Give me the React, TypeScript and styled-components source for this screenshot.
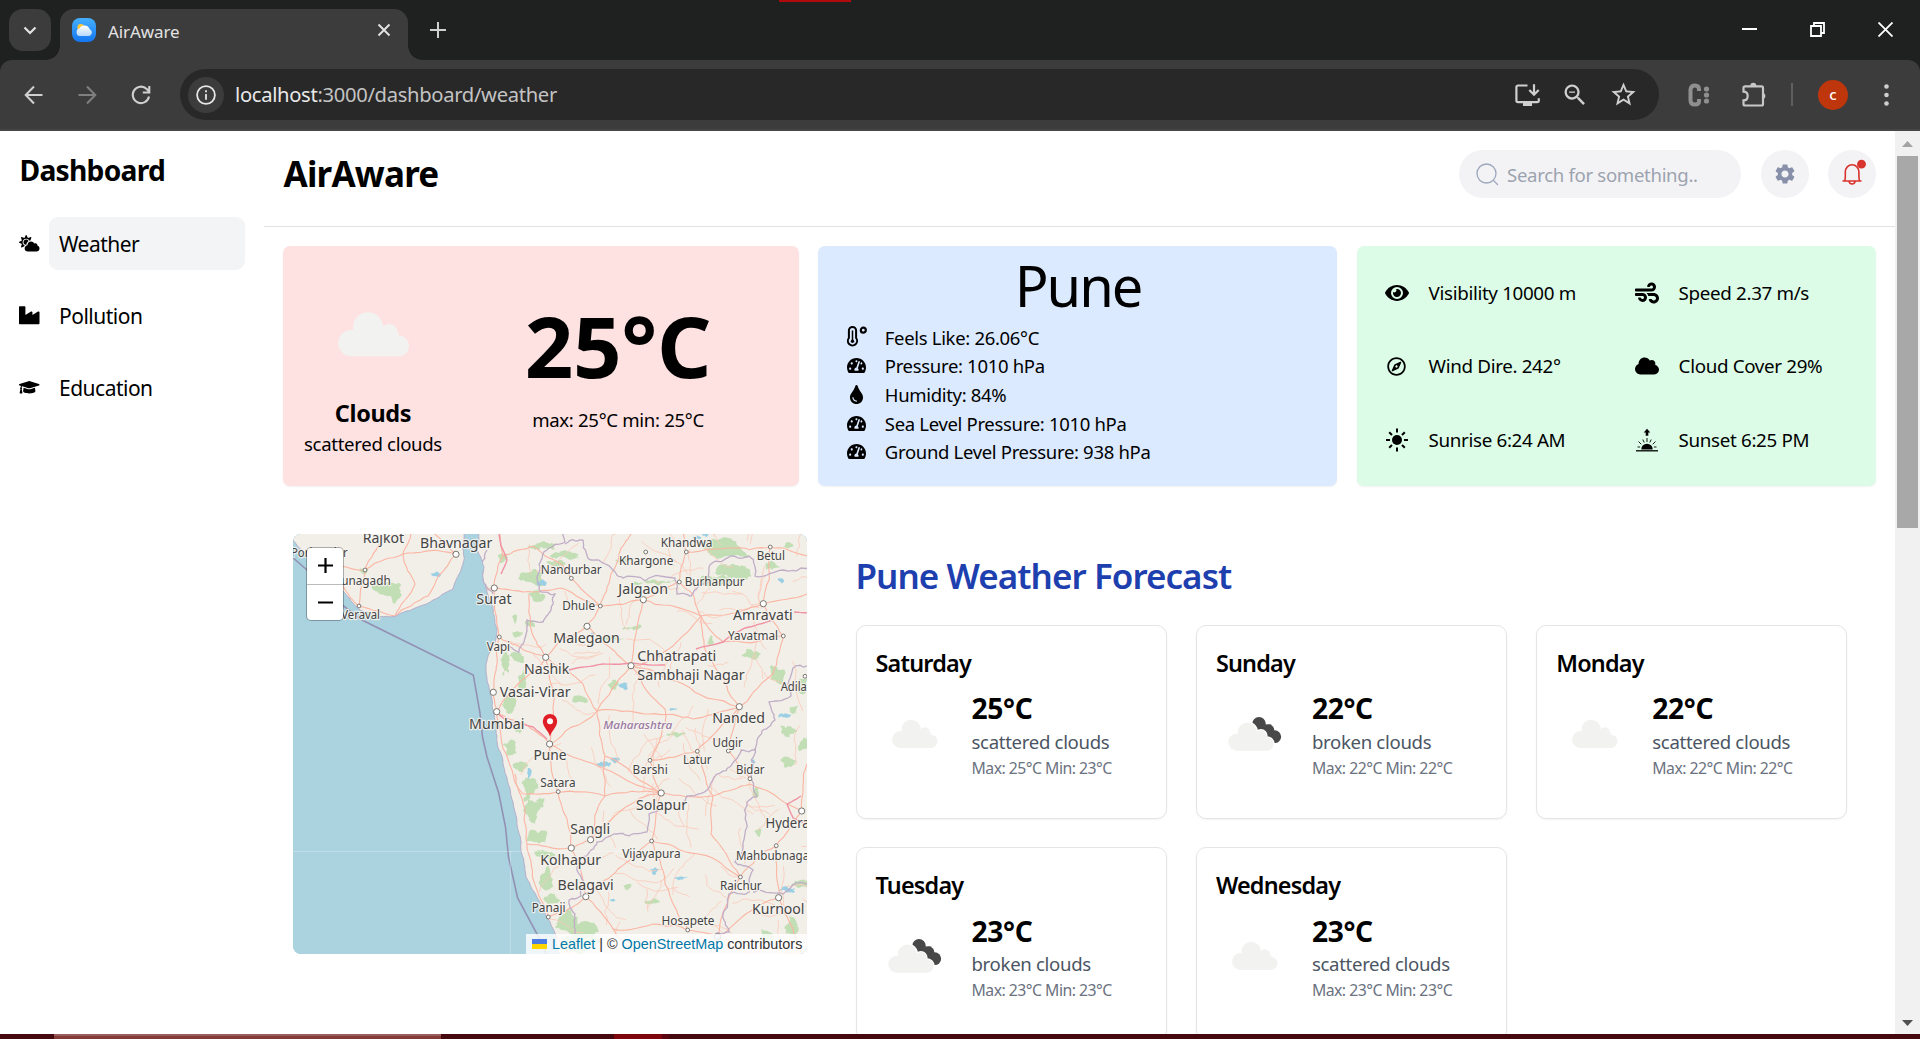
import React from "react";
import styled, { createGlobalStyle } from "styled-components";
import {
  FaCloudSun, FaIndustry, FaGraduationCap, FaTachometerAlt, FaTint, FaEye, FaWind, FaRegCompass, FaCloud,
} from "react-icons/fa";
import { MdSettings, MdStarBorder, MdOutlineZoomOut } from "react-icons/md";

const GlobalStyle = createGlobalStyle`
  * { box-sizing: border-box; }
  html, body { margin: 0; padding: 0; background: #fff; overflow: hidden; }
  body { font-family: "Noto Sans", "Open Sans", sans-serif; color: #000; letter-spacing: -0.02em; }
  svg { display: block; flex: none; }
`;

const Screen = styled.div`
  width: 1920px; height: 1039px; display: flex; flex-direction: column; overflow: hidden; position: relative;
`;

/* ---------- browser chrome ---------- */
const TabStrip = styled.div`
  height: 60px; flex: none; background: #1f2120; display: flex; align-items: flex-start; padding: 9px 27px 0 9px;
`;
const TabMenu = styled.div`
  width: 42px; height: 42px; border-radius: 14px; background: #3c3c3c; display: grid; place-items: center; margin-right: 9px;
`;
const Tab = styled.div`
  position: relative; width: 348px; height: 51px; border-radius: 14px 14px 0 0; background: #3c3c3c;
  display: flex; align-items: center; padding: 0 17px 9px 12px; color: #e3e3e3; font-size: 17px;
  &::before, &::after {
    content: ""; position: absolute; bottom: 0; width: 14px; height: 14px;
  }
  &::before { left: -14px; background: radial-gradient(circle at 0 0, transparent 13.5px, #3c3c3c 14px); }
  &::after { right: -14px; background: radial-gradient(circle at 100% 0, transparent 13.5px, #3c3c3c 14px); }
`;
const TabTitle = styled.span`
  margin-left: 12px; flex: 1; line-height: 20px; padding-top: 3px; letter-spacing: -0.005em;
`;
const NewTab = styled.div`margin: 13px 0 0 22px;`;
const WindowButtons = styled.div`
  margin: 13px 0 0 auto; display: flex; gap: 53px;
`;
const RecordingBar = styled.div`
  position: absolute; left: 779px; top: 0; width: 72px; height: 2px; background: #b00a0d;
`;
const Toolbar = styled.div`
  height: 71px; flex: none; background: #3c3c3c; border-bottom: 2px solid #464646; display: flex; align-items: center;
  padding: 0 23px 0 22px; border-radius: 12px 12px 0 0;
`;
const ToolbarBack = styled.div`background: #1f2120; flex: none;`;
const NavIcons = styled.div`display: flex; gap: 29.5px; width: 158px;`;
const Omnibox = styled.div`
  width: 1479px; height: 51px; border-radius: 26px; background: #282828; display: flex; align-items: center;
  padding: 0 21px 0 8px; color: #e8e8e8; font-size: 20.2px;
`;
const SiteInfo = styled.div`
  width: 36px; height: 36px; border-radius: 50%; background: #3c3c3c; display: grid; place-items: center; margin-right: 11px;
`;
const Url = styled.span`line-height: 28px; flex: 1; padding-bottom: 2px; span { color: #c3c3c3; }`;
const OmniActions = styled.div`display: flex; align-items: center; gap: 20.5px; color: #cfcfcf;`;
const Extensions = styled.div`display: flex; align-items: center; margin-left: 28px; color: #c7c7c7;`;
const PuzzleSlot = styled.div`margin-left: 31px;`;
const Divider = styled.div`width: 2px; height: 23px; background: #5f5f5f; margin: 0 25px 0 24px;`;
const Avatar = styled.div`
  width: 30px; height: 30px; border-radius: 50%; background: #c0360c; color: #fff; font-size: 15px; line-height: 28px;
  text-align: center; margin-right: 36px; letter-spacing: 0; font-weight: 500;
`;

/* ---------- page frame ---------- */
const Page = styled.div`height: 903px; flex: none; display: flex; overflow: hidden;`;
const Sidebar = styled.aside`width: 264px; flex: none; padding: 20px 19px;`;
const SidebarTitle = styled.h2`
  margin: 0 0 28px 0.5px; font-size: 28.2px; line-height: 38px; font-weight: 700; letter-spacing: -0.026em;
`;
const NavItem = styled.div`
  display: flex; align-items: center; gap: 9.5px; height: 53px; margin-bottom: 19px;
`;
const NavLabel = styled.div<{ $active?: boolean }>`
  flex: 1; height: 53px; line-height: 53px; padding: 1px 0 0 10px; border-radius: 9px; font-size: 21px; letter-spacing: -0.024em;
  background: ${(p) => (p.$active ? "#f3f4f6" : "transparent")};
`;
const Main = styled.main`width: 1631px; flex: none; display: flex; flex-direction: column;`;
const Header = styled.header`
  height: 96px; flex: none; border-bottom: 1px solid #e0e2e4; display: flex; align-items: flex-start; padding: 19px 19px 0; gap: 19px;
`;
const Brand = styled.h1`
  margin: 0 auto 0 0.5px; font-size: 35px; line-height: 48px; font-weight: 700; letter-spacing: -0.023em;
`;
const SearchBox = styled.div`
  width: 282px; height: 48px; border-radius: 24px; background: #f3f3f6; display: flex; align-items: center; margin-right: 1px;
  padding-left: 17px; gap: 8px; color: #9ca3af; font-size: 18.6px;
`;
const RoundButton = styled.div`
  width: 48px; height: 48px; border-radius: 50%; background: #f3f3f6; display: grid; place-items: center; color: #8790a8;
`;

/* ---------- summary cards ---------- */
const Summary = styled.section`
  display: grid; grid-template-columns: 516px 519px 519.4px; column-gap: 19.3px; padding: 19px 0 0 19px;
`;
const Panel = styled.div<{ $bg: string }>`
  height: 240px; border-radius: 7px; background: ${(p) => p.$bg}; box-shadow: 0 1px 2px rgba(0, 0, 0, 0.06);
`;
const NowPanel = styled(Panel)`display: flex; align-items: center; padding-left: 20px;`;
const Condition = styled.div`
  width: 140px; display: flex; flex-direction: column; align-items: center; white-space: nowrap; padding-top: 2px;
`;
const ConditionName = styled.div`font-size: 23.4px; line-height: 33.6px; font-weight: 700; padding-top: 2px;`;
const ConditionText = styled.div`font-size: 18.6px; line-height: 28.8px;`;
const TempBlock = styled.div`width: 350px; display: flex; flex-direction: column; align-items: center; padding-top: 2px;`;
const BigTemp = styled.div`font-size: 85px; line-height: 86.4px; font-weight: 700; padding-top: 3px;`;
const Range = styled.div`font-size: 18.6px; line-height: 28.8px; margin-top: 17px;`;
const CityPanel = styled(Panel)`padding: 11px 0 0 28.5px;`;
const City = styled.div`
  font-size: 56px; line-height: 57.6px; text-align: center; margin: 0 28px 9px 0; letter-spacing: -0.035em;
`;
const CityRow = styled.div`
  display: grid; grid-template-columns: 20px 1fr; column-gap: 18px; height: 28.7px; line-height: 28.7px; font-size: 18.5px;
  svg { justify-self: center; margin-top: 4px; }
  &:nth-child(2) svg { margin-top: 2px; }
`;
const MetricsPanel = styled(Panel)`
  display: grid; grid-template-columns: 250px 1fr; grid-auto-rows: 73.5px; padding: 10px 0 0 28px;
`;
const Metric = styled.div`
  display: grid; grid-template-columns: 24px 1fr; column-gap: 20px; align-items: center; font-size: 18.8px; white-space: nowrap;
  letter-spacing: -0.018em;
  svg { justify-self: center; }
`;

/* ---------- lower section ---------- */
const Lower = styled.section`display: flex; padding: 48px 0 0 29px;`;
const MapBox = styled.div`
  position: relative; width: 514px; height: 420px; border-radius: 8px; overflow: hidden; flex: none; background: #aad3df;
`;
const ZoomControl = styled.div`
  position: absolute; left: 13px; top: 13px; width: 38px; height: 74px; border: 1.5px solid rgba(0, 0, 0, 0.28);
  border-radius: 5px; background: #fff; background-clip: padding-box; display: flex; flex-direction: column;
`;
const ZoomKey = styled.div`
  flex: 1; display: grid; place-items: center;
  &:first-child { border-bottom: 1px solid #bbb; }
`;
const Attribution = styled.div`
  position: absolute; right: 0; bottom: 0; width: 281px; height: 20px; background: rgba(255, 255, 255, 0.8);
  display: flex; align-items: center; padding-left: 6px; font: 14.4px/20px "Liberation Sans", Arial, sans-serif; color: #333;
  white-space: pre; letter-spacing: 0;
  svg { margin-right: 5px; }
  a { color: #0078a8; }
`;
const Forecast = styled.div`margin-left: 48.5px; padding-top: 20px;`;
const ForecastTitle = styled.h2`
  margin: 0 0 28px; font-size: 35px; line-height: 43.2px; font-weight: 600; color: #1e40af; letter-spacing: -0.027em;
`;
const DayGrid = styled.div`
  display: grid; grid-template-columns: repeat(3, 311px); grid-auto-rows: 193.5px; gap: 28.7px 29.4px;
`;
const DayCard = styled.div`
  border: 1px solid #e3e5e8; border-radius: 10px; box-shadow: 0 1px 2px rgba(0, 0, 0, 0.05); padding: 20.6px 0 0 19px;
`;
const DayName = styled.div`font-size: 23.4px; line-height: 33.6px; font-weight: 600; letter-spacing: -0.034em;`;
const DayBody = styled.div`display: flex; align-items: center; gap: 19.2px; margin-top: 9px;`;
const DayTemp = styled.div`font-size: 28.2px; line-height: 38.4px; font-weight: 700;`;
const DayText = styled.div`font-size: 18.6px; line-height: 27.8px; color: #4b5563;`;
const DayRange = styled.div`font-size: 15.8px; line-height: 24px; color: #6b7280; letter-spacing: -0.033em;`;

const ScrollTrack = styled.div`
  width: 25px; flex: none; background: #f1f1f1; display: flex; flex-direction: column; align-items: center;
  padding: 10px 0 8px;
`;
const ScrollThumb = styled.div`width: 21px; height: 372px; background: #a8a8a8; margin: 9px 0 auto;`;

const Taskbar = styled.div`height: 5px; flex: none; background: #45080f; display: flex;`;
const TaskPart = styled.div<{ $w: number; $c: string; $top?: string }>`
  width: ${(p) => p.$w}px; height: 5px; background: ${(p) => p.$c}; border-top: ${(p) => (p.$top ? `2px solid ${p.$top}` : "0")};
`;

/* ---------- drawings ---------- */
const CloudShape = ({ fill = "#f2f2f0", outline }: { fill?: string; outline?: string }) => (
  <g fill={fill} stroke={outline || "none"} strokeWidth={outline ? 3 : 0}>
    {outline && (
      <g>
        <circle cx="45.8" cy="43.5" r="12.5" /><circle cx="63.5" cy="48" r="7.2" />
        <circle cx="71.3" cy="59" r="8.7" />
      </g>
    )}
    <g stroke="none">
      <circle cx="45.8" cy="43.5" r="12.5" />
      <circle cx="63.5" cy="48" r="7.2" />
      <circle cx="32" cy="56.7" r="11" />
      <circle cx="71.3" cy="59" r="8.7" />
      <rect x="32" y="48" width="39.3" height="19.7" />
    </g>
  </g>
);
const ScatteredIcon = ({ size }: { size: number }) => (
  <svg width={size} height={size} viewBox="0 0 100 100"><CloudShape /></svg>
);
const BrokenIcon = ({ size }: { size: number }) => (
  <svg width={size} height={size} viewBox="0 0 100 100">
    <g fill="#484848">
      <circle cx="56" cy="36.2" r="8.8" /><circle cx="68.5" cy="44.5" r="7.4" /><circle cx="76.5" cy="53" r="8.3" />
      <rect x="56" y="37" width="16" height="20" />
    </g>
    <g transform="translate(-5 3.6)"><CloudShape outline="#fff" /></g>
  </svg>
);
const Thermo = () => (
  <svg width="20" height="21" viewBox="0 0 20 21" fill="none" stroke="#000">
    <path d="M1.9 4.6a3.6 3.6 0 0 1 7.2 0v7.4a4.6 4.6 0 1 1-7.2 0z" strokeWidth="2" />
    <path d="M5.500 4.500v10" strokeWidth="1.5" /><circle cx="5.5" cy="15.2" r="1.7" fill="#000" stroke="none" />
    <circle cx="16.3" cy="4.2" r="2.5" strokeWidth="2.2" />
  </svg>
);
const SunIcon = () => (
  <svg width="24" height="24" viewBox="0 0 24 24" stroke="#000" strokeWidth="2">
    <circle cx="12" cy="12" r="5" stroke="none" />
    <path d="M12 .5v4M12 19.5v4M1 12h4M19 12h4M4.2 4.2l2.8 2.8M17 17l2.8 2.8M4.2 19.8L7 17M17 7l2.8-2.8" />
  </svg>
);
const HorizonIcon = () => (
  <svg width="24" height="24" viewBox="0 0 24 24" stroke="#000">
    <path d="M1 22.8h22" strokeWidth="1.3" />
    <path d="M6.3 21.4a5.7 5.7 0 0 1 11.4 0z" stroke="none" />
    <path d="M12 10v4M7.8 11.5l1.4 3M16.2 11.5l-1.4 3M3.5 13.5l2.8 2.8M20.5 13.5l-2.8 2.8M2.5 19h2.6M21.5 19h-2.6" strokeWidth="0.9" />
    <path d="M12 0.8L15.3 4.6H13.3V7.8H10.7V4.6H8.7Z" stroke="none" />
  </svg>
);
const InstallIcon = () => (
  <svg width="25" height="22" viewBox="0 0 25 22" fill="none" stroke="#cfcfcf" strokeWidth="2.2">
    <path d="M12.5 1.5H3a1.6 1.6 0 0 0-1.6 1.6v13.5A1.6 1.6 0 0 0 3 18.2h19.2a1.6 1.6 0 0 0 1.6-1.6v-2.4" />
    <path d="M19 .2v10M14.3 6l4.7 4.8L23.7 6" />
    <path d="M8 18.500h9V22H8z" fill="#cfcfcf" stroke="none" />
  </svg>
);
const PuzzleIcon = () => (
  <svg width="25" height="25" viewBox="0 0 25 25" fill="none" stroke="#c7c7c7" strokeWidth="2.2">
    <path d="M1.5 5.8a1.5 1.5 0 0 1 1.5-1.5h16.5A1.5 1.5 0 0 1 21 5.8v16.2a1.5 1.5 0 0 1-1.5 1.5H3A1.5 1.5 0 0 1 1.5 22v-3.6c3 0 4.2-2 4.2-4.4S4.5 9.6 1.5 9.6z" />
    <path d="M8.3 4a3 3.2 0 0 1 6 0zM21.5 11a3 3.2 0 0 1 0 6z" fill="#c7c7c7" stroke="none" />
  </svg>
);
const Favicon = () => (
  <svg width="24" height="24" viewBox="0 0 24 24">
    <defs>
      <linearGradient id="sky" x1="0" y1="0" x2="0" y2="1"><stop offset="0" stopColor="#45b0ff" /><stop offset="1" stopColor="#1476f2" /></linearGradient>
      <linearGradient id="puff" x1="0" y1="0" x2="0" y2="1"><stop offset="0" stopColor="#fff" /><stop offset="1" stopColor="#b9d8fb" /></linearGradient>
    </defs>
    <rect width="24" height="24" rx="8" fill="url(#sky)" />
    <circle cx="8.8" cy="9.5" r="3.4" fill="#ffc83a" />
    <path d="M7.6 18a3.8 3.8 0 0 1-.2-7.4 5.6 5.6 0 0 1 10.3.6 3.6 3.6 0 0 1-.6 6.8z" fill="url(#puff)" />
  </svg>
);

/* ---------- map ---------- */
type Pt = [number, number];
const rng = (seed: number) => () => {
  seed = (seed * 1664525 + 1013904223) % 4294967296;
  return seed / 4294967296;
};
const wobble = (pts: Pt[], amount: number, seed: number, closed = false) => {
  const r = rng(seed);
  let cur = closed ? [...pts, pts[0]] : pts;
  for (let k = 0; k < 3; k++) {
    const next: Pt[] = [cur[0]];
    for (let i = 1; i < cur.length; i++) {
      const [ax, ay] = cur[i - 1];
      const [bx, by] = cur[i];
      const d = Math.min(Math.hypot(bx - ax, by - ay), 60) * amount;
      next.push([(ax + bx) / 2 + (r() - 0.5) * d, (ay + by) / 2 + (r() - 0.5) * d], cur[i]);
    }
    cur = next;
  }
  return "M" + cur.map(([x, y]) => `${x.toFixed(1)} ${y.toFixed(1)}`).join("L") + (closed ? "Z" : "");
};

const saurashtra: Pt[] = [[-30, -30], [-30, -6], [-2, 4], [14, 20], [30, 38], [50, 57], [58, 67], [67, 76], [87, 82.5], [102, 82.5], [120, 75], [140, 66], [160, 55], [163, 46], [168, 36], [171, 26], [169.5, 14], [171, 6], [172, -30]];
const mainland: Pt[] = [[186, -30], [186, -2], [184, 16], [189, 26], [191, 33], [190, 46], [193, 54], [195, 61], [200, 73], [202, 86], [204, 96], [202, 108], [197, 118], [193, 133], [194, 146], [197, 158], [199.5, 168], [200.5, 179], [203, 190], [204, 203], [206, 216], [212, 239], [217.5, 258], [222, 278], [225, 296], [228.5, 319], [233, 343], [242, 359], [250, 373], [254, 383], [259, 393], [262.5, 401], [267, 422], [268, 450], [550, 450], [550, -30]];
const maritime = "M-2 22L14 36L40 64L69 86L180.3 141L187 179L189.5 203L194 223L205.7 259L212.5 293L215.5 323L224.6 364L244.6 401L254 422";

type Place = [string, number, number, number, 0 | 1, number, number];
/* name, left, right, baseline, large, dot x, dot y */
const places: Place[] = [
  ["Rajkot", 69.7, 111, 8.7, 1, -9, -9], ["Bhavnagar", 127, 199.3, 14.3, 1, 163, 20.3], ["Porbandar", -2, 54.7, 23.3, 0, -9, -9],
  ["Junagadh", 45, 97.7, 50.7, 0, 72, 36], ["Veraval", 48.3, 87, 84.7, 0, 66, 72], ["Surat", 183.3, 218.7, 70.3, 1, 201.3, 54],
  ["Vapi", 193.7, 217, 116.7, 0, 206.3, 103], ["Nashik", 231, 276.3, 139.7, 1, 252.7, 123.3], ["Vasai-Virar", 206.7, 277.7, 162.7, 1, 200.3, 158.3],
  ["Mumbai", 176, 231.3, 195, 1, 203.7, 177.7], ["Pune", 240.4, 273.5, 226, 1, 256.6, 210], ["Nandurbar", 247.7, 308.7, 39.7, 0, 278.3, 44.3],
  ["Khandwa", 367.7, 419.3, 13, 0, 393.3, 18], ["Khargone", 326, 380.3, 31.3, 0, 352.7, 18], ["Betul", 463.7, 492, 26.3, 0, 477.3, 13],
  ["Burhanpur", 391.7, 451.7, 52, 0, 386.3, 48], ["Jalgaon", 325.3, 375, 60, 1, 350.3, 65.7], ["Dhule", 269.3, 302, 76.3, 0, 307.3, 72],
  ["Amravati", 440, 499.7, 86, 1, 470.3, 69.7], ["Yavatmal", 435, 485, 105.7, 0, 490.3, 102], ["Malegaon", 260.3, 326.7, 108.7, 1, 294, 92.3],
  ["Chhatrapati", 344.3, 423.3, 127.3, 1, 338, 131.7], ["Sambhaji Nagar", 344.3, 451.7, 146, 1, -9, -9], ["Adilabad", 487.7, 534, 156.7, 0, 512, 142.3],
  ["Nanded", 419.3, 472, 189.3, 1, 446.3, 172.7], ["Udgir", 419.5, 449.8, 212.7, 0, 435.3, 217], ["Latur", 390, 418.5, 230.3, 0, 404.3, 217.3],
  ["Barshi", 339.6, 374.7, 239.7, 0, 357, 226.3], ["Bidar", 443, 471.5, 240, 0, 457, 244.7], ["Satara", 247.3, 282.5, 252.7, 0, 265.2, 257.7],
  ["Solapur", 343, 394, 275.7, 1, 368.2, 259], ["Sangli", 277.3, 317, 299.7, 1, 297.6, 305.7], ["Hyderabad", 472.5, 540, 293.7, 1, 508.7, 277],
  ["Kolhapur", 247.3, 308, 331, 1, 278.3, 314], ["Vijayapura", 329.3, 387.5, 323.7, 0, 358.6, 307], ["Mahbubnagar", 443, 521, 325.7, 0, 483.2, 311.7],
  ["Belagavi", 264.5, 320.7, 356.3, 1, 292.8, 362.7], ["Raichur", 427, 468.7, 356, 0, 447.4, 343], ["Panaji", 238.7, 272.5, 377.7, 0, 255.3, 383],
  ["Kurnool", 459, 511.5, 379.7, 1, 485.6, 363.7], ["Hosapete", 368.5, 421.5, 391, 0, 394.7, 396],
];

const trunkRoads: Pt[][] = [
  [[184, 58], [201, 54], [230, 58], [268, 54], [307, 72], [350, 66], [386, 48]],
  [[201, 54], [206, 103], [204, 130], [200, 158], [204, 178], [232, 190], [257, 210], [265, 258], [278, 314], [293, 363], [320, 395], [345, 422]],
  [[204, 178], [225, 150], [253, 123], [294, 92], [307, 72], [318, 40], [328, 14], [340, -2]],
  [[253, 123], [262, 160], [257, 210]], [[257, 210], [304, 177], [338, 132], [350, 66]],
  [[304, 177], [290, 150], [253, 123]], [[304, 177], [312, 222], [368, 259]], [[257, 210], [305, 232], [368, 259], [420, 262], [457, 250], [509, 277]],
  [[338, 132], [372, 175], [357, 226], [368, 259], [359, 307], [372, 350], [395, 396]], [[446, 173], [404, 217], [357, 226]],
  [[446, 173], [436, 217], [457, 245]], [[338, 132], [390, 150], [446, 173], [480, 140], [490, 102], [470, 70], [477, 13]],
  [[350, 66], [408, 82], [470, 70], [514, 60]], [[386, 48], [393, 18], [390, -2]], [[393, 18], [440, 14], [477, 13], [514, 22]],
  [[294, 92], [320, 116], [338, 132]], [[298, 306], [278, 314]], [[298, 306], [330, 275], [368, 259]], [[359, 307], [325, 335], [293, 363]],
  [[293, 363], [272, 378], [255, 383]], [[255, 383], [262, 400], [276, 422]], [[320, 395], [360, 390], [395, 396], [425, 403], [486, 364], [483, 312], [509, 277]],
  [[447, 343], [483, 312]], [[447, 343], [425, 403]], [[359, 307], [405, 320], [447, 343]], [[420, 262], [418, 300], [447, 343]],
  [[509, 277], [514, 230]], [[486, 364], [500, 395], [512, 422]], [[72, 36], [66, 72], [102, 82], [135, 62], [163, 20]], [[72, 36], [88, 8], [92, -2]],
  [[0, 12], [30, 28], [72, 36], [110, 20], [118, -2]], [[66, 72], [50, 52], [30, 28]], [[110, 20], [122, 50], [102, 82]], [[110, 20], [163, 20]],
  [[163, 20], [150, 8], [140, -2]], [[201, 54], [210, 22], [206, -2]], [[210, 22], [240, 12], [268, 30], [278, 44]], [[278, 44], [307, 72]],
  [[206, 103], [225, 112], [253, 123]], [[236, 60], [238, 95], [253, 123]], [[408, 82], [414, 120], [446, 173]], [[408, 82], [400, 60], [386, 48]],
  [[408, 82], [430, 108], [490, 102]], [[408, 82], [380, 112], [338, 132]], [[404, 217], [420, 262]], [[265, 258], [312, 262], [368, 259]],
  [[312, 222], [312, 262], [298, 306]], [[304, 177], [357, 180], [400, 185], [446, 173]], [[222, 240], [232, 275], [234, 310], [240, 345], [255, 383]],
  [[204, 178], [215, 225], [230, 260]], [[234, 310], [278, 314]], [[230, 260], [265, 258]],
];
const redRoads: Pt[][] = [[[276, 136], [310, 130], [338, 129], [372, 131]], [[403, 115], [430, 108], [452, 94], [480, 86]], [[501, 78], [516, 79]], [[203, 178], [216, 188], [240, 193], [254, 205]], [[508, 262], [494, 270], [500, 284], [514, 290]], [[206, -2], [208, 12], [214, 26], [208, 40]]];
const borders: Pt[][] = [
  [[202, 110], [216, 112], [226, 118], [232, 104], [234, 86], [250, 88], [258, 76], [262, 60], [248, 58], [246, 30], [256, 14], [272, 8], [270, -2]],
  [[272, 10], [290, 6], [298, 26], [322, 38], [330, 44], [382, 44], [384, 60], [398, 62], [416, 48], [418, 30], [440, 22], [456, 22], [462, 42], [490, 36], [516, 34]],
  [[516, 132], [500, 134], [498, 162], [476, 168], [482, 186], [470, 196]],
  [[470, 196], [462, 216], [448, 216], [438, 232], [424, 240], [414, 256], [394, 262], [384, 276], [356, 280], [354, 298], [336, 302], [324, 300], [304, 308], [294, 322], [286, 324], [284, 336], [292, 350], [288, 362], [276, 366], [282, 380], [282, 400]],
  [[462, 214], [458, 240], [464, 262], [454, 268], [452, 300], [442, 328], [460, 336], [456, 358], [436, 360], [430, 380], [436, 398], [422, 400]],
  [[460, 358], [490, 360], [516, 350]], [[200, 60], [190, 46], [188, 30], [194, 16]],
];
const greens: [number, number, number, number][] = [
  [98, 56, 20, 12], [72, 36, 5, 4], [210, 24, 5, 8], [240, 44, 14, 8], [212, 130, 5, 12], [216, 170, 6, 10], [225, 124, 9, 6], [230, 145, 4, 12],
  [218, 214, 9, 11], [228, 232, 9, 6], [236, 254, 9, 14], [240, 276, 10, 12], [244, 303, 10, 8], [250, 320, 10, 8], [254, 345, 8, 12], [258, 366, 9, 6],
  [276, 390, 14, 14], [290, 398, 18, 12], [285, 410, 22, 10], [253, 398, 4, 3], [360, 48, 24, 3], [430, 12, 30, 13], [440, 36, 22, 9], [420, 46, 22, 6],
  [272, 22, 20, 4], [262, 30, 12, 3], [330, 26, 10, 2], [340, 94, 10, 2], [318, 104, 14, 3], [322, 150, 7, 5], [286, 165, 10, 4], [458, 120, 9, 5],
  [484, 142, 10, 10], [508, 150, 7, 9], [500, 176, 6, 5], [418, 108, 4, 6], [478, 32, 10, 4], [496, 12, 7, 3], [494, 198, 12, 6], [510, 210, 6, 8],
  [462, 258, 5, 6], [506, 350, 10, 5], [500, 390, 8, 10], [474, 402, 10, 8], [383, 200, 9, 3], [335, 352, 5, 4], [360, 368, 8, 3], [466, 299, 4, 5],
  [250, 12, 14, 4], [244, 62, 8, 6], [238, 90, 6, 4], [496, 228, 8, 5], [224, 100, 5, 4], [222, 84, 3, 5], [226, 195, 5, 6], [248, 268, 5, 5],
];
const lakes: [number, number, number, number][] = [
  [143, 40, 6, 2.5], [249, 49, 5, 4], [331, 152, 6, 4], [312, 230, 8, 3], [322, 226, 5, 3], [493, 182, 8, 3], [362, 336, 5, 4], [388, 344, 7, 2.5],
  [488, 46, 4, 3], [380, 175, 4, 1.5], [300, 100, 3, 1.5], [404, 4, 5, 2], [236, 240, 2, 6], [320, 366, 4, 1.5], [460, 228, 3, 3], [413, 1, 5, 2],
  [254, 155, 3, 1.5], [289, 355, 4, 1.5], [495, 356, 9, 3],
];

const makeMinor = () => {
  const r = rng(77);
  const out: string[] = [];
  for (let i = 0; i < 120; i++) {
    const x = 225 + r() * 290;
    const y = r() * 420;
    const a = r() * Math.PI * 2;
    const l = 18 + r() * 34;
    if (x < 205 + y * 0.16) continue;
    out.push(wobble([[x, y], [x + Math.cos(a) * l, y + Math.sin(a) * l]], 0.3, i + 5));
  }
  return out;
};
const minor = makeMinor();
const blob = (cx: number, cy: number, rx: number, ry: number, seed: number) => {
  const r = rng(seed * 991 + 3);
  const pts: Pt[] = [];
  for (let i = 0; i < 9; i++) {
    const a = (i / 9) * Math.PI * 2;
    const k = 0.45 + r() * 0.75;
    pts.push([cx + Math.cos(a) * rx * k, cy + Math.sin(a) * ry * k]);
  }
  return wobble(pts, 0.5, seed, true);
};

const MapDrawing = () => (
  <svg width="514" height="420" viewBox="0 0 514 420">
    <defs>
      <clipPath id="land">
        <path d={wobble(saurashtra, 0.12, 4, true)} /><path d={wobble(mainland, 0.12, 9, true)} />
      </clipPath>
    </defs>
    <rect width="514" height="420" fill="#aad3df" />
    <rect width="514" height="420" fill="#f2efe9" clipPath="url(#land)" />
    <g clipPath="url(#land)">
      <g fill="#b9dbab" opacity="0.85">{greens.map((g, i) => <path key={i} d={blob(g[0], g[1], g[2], g[3], i + 2)} />)}</g>
      <g fill="#9bcfe4">{lakes.map((g, i) => <path key={i} d={blob(g[0], g[1], g[2], g[3], i + 60)} />)}</g>
      <g fill="none" stroke="#fbc9b8" strokeWidth="0.8">{minor.map((d, i) => <path key={i} d={d} />)}</g>
      <g fill="none" stroke="#fbb5a2" strokeWidth="1.1">{trunkRoads.map((p, i) => <path key={i} d={wobble(p, 0.14, i + 20)} />)}</g>
      <g fill="none" stroke="#f093a4" strokeWidth="1.4">{redRoads.map((p, i) => <path key={i} d={wobble(p, 0.06, i + 90)} />)}</g>
      <g fill="none" stroke="#c0adc6" strokeWidth="1.3">{borders.map((p, i) => <path key={i} d={wobble(p, 0.3, i + 140)} />)}</g>
    </g>
    <path d={wobble(saurashtra, 0.12, 4, true)} fill="none" stroke="#b3a9c6" strokeWidth="0.9" />
    <path d={wobble(mainland, 0.12, 9, true)} fill="none" stroke="#b3a9c6" strokeWidth="0.9" />
    <path d={maritime} fill="none" stroke="#9391b3" strokeWidth="1.6" />
    <path d="M0 317.4H514M217.4 317V420" stroke="#fff" strokeOpacity="0.3" />
    <g fill="#fff" stroke="#77756f" strokeWidth="1">
      {places.map((p) => p[5] > 0 && <circle key={p[0]} cx={p[5]} cy={p[6]} r={p[4] ? 3.1 : 1.9} />)}
      <circle cx="424.7" cy="402.7" r="3" />
    </g>
    <g fontFamily='"Noto Sans", sans-serif' fill="#444" stroke="#f6f4ef" strokeWidth="2.4" strokeLinejoin="round" strokeOpacity="0.85" paintOrder="stroke" letterSpacing="0">
      {places.map((p) => (
        <text key={p[0]} x={p[1]} y={p[3]} fontSize={p[4] ? 13.8 : 11.8} textLength={p[2] - p[1]} lengthAdjust="spacingAndGlyphs">{p[0]}</text>
      ))}
      <text x="310.3" y="195.3" fontSize="11.6" fontStyle="italic" fontWeight="500" fill="#9a78a4" textLength="69" lengthAdjust="spacingAndGlyphs">Maharashtra</text>
    </g>
    <path d="M257 202.5c-1-5-7.2-9.5-7.2-15.3a7.2 7.2 0 0 1 14.4 0c0 5.8-6.2 10.3-7.2 15.3z" fill="#e01e26" />
    <circle cx="257" cy="187.2" r="3" fill="#fff" />
  </svg>
);

/* ---------- data ---------- */
const readings: [string, React.ReactNode][] = [
  ["Feels Like: 26.06°C", <Thermo />],
  ["Pressure: 1010 hPa", <FaTachometerAlt size={19} />],
  ["Humidity: 84%", <FaTint size={19} />],
  ["Sea Level Pressure: 1010 hPa", <FaTachometerAlt size={19} />],
  ["Ground Level Pressure: 938 hPa", <FaTachometerAlt size={19} />],
];
const metrics: [string, React.ReactNode][] = [
  ["Visibility 10000 m", <FaEye size={24} />],
  ["Speed 2.37 m/s", <FaWind size={24} />],
  ["Wind Dire. 242°", <FaRegCompass size={19} />],
  ["Cloud Cover 29%", <FaCloud size={24} />],
  ["Sunrise 6:24 AM", <SunIcon />],
  ["Sunset 6:25 PM", <HorizonIcon />],
];
const days = [
  { day: "Saturday", temp: 25, text: "scattered clouds", max: 25, min: 23 },
  { day: "Sunday", temp: 22, text: "broken clouds", max: 22, min: 22 },
  { day: "Monday", temp: 22, text: "scattered clouds", max: 22, min: 22 },
  { day: "Tuesday", temp: 23, text: "broken clouds", max: 23, min: 23 },
  { day: "Wednesday", temp: 23, text: "scattered clouds", max: 23, min: 23 },
];

export default function App() {
  return (
    <Screen>
      <GlobalStyle />
      <TabStrip>
        <TabMenu>
          <svg width="14" height="14" viewBox="0 0 14 14" fill="none" stroke="#e3e3e3" strokeWidth="2.2"><path d="M1.5 4.5L7 10l5.5-5.5" /></svg>
        </TabMenu>
        <Tab>
          <Favicon />
          <TabTitle>AirAware</TabTitle>
          <svg width="14" height="14" viewBox="0 0 14 14" stroke="#e3e3e3" strokeWidth="1.9"><path d="M1.5 1.5l11 11M12.5 1.5l-11 11" /></svg>
        </Tab>
        <NewTab>
          <svg width="16" height="16" viewBox="0 0 16 16" stroke="#d0d0d0" strokeWidth="2"><path d="M8 0v16M0 8h16" /></svg>
        </NewTab>
        <WindowButtons>
          <svg width="15" height="15" viewBox="0 0 15 15" stroke="#fff" strokeWidth="2"><path d="M0 7h15" /></svg>
          <svg width="15" height="15" viewBox="0 0 15 15" stroke="#fff" strokeWidth="1.8" fill="none"><path d="M1 4h10v10H1zM4 4V1h10v10h-3" /></svg>
          <svg width="15" height="15" viewBox="0 0 15 15" stroke="#fff" strokeWidth="1.8"><path d="M.5.5l14 14M14.5.5l-14 14" /></svg>
        </WindowButtons>
      </TabStrip>
      <RecordingBar />
      <ToolbarBack>
        <Toolbar>
          <NavIcons>
            <svg width="24" height="24" viewBox="0 0 24 24" fill="none" stroke="#cfcfcf" strokeWidth="2"><path d="M20.5 12H4.5M12 3.5L3.7 12l8.3 8.5" /></svg>
            <svg width="24" height="24" viewBox="0 0 24 24" fill="none" stroke="#7f7f7f" strokeWidth="2"><path d="M2.5 12h16M11 3.5l8.3 8.500-8.300 8.500" /></svg>
            <svg width="24" height="24" viewBox="0 0 24 24" fill="none" stroke="#cfcfcf" strokeWidth="2.1"><path d="M20 13.5a8.2 8.2 0 1 1-2.3-7.5l2 2M20.3 3v6.5h-6.5" /></svg>
          </NavIcons>
          <Omnibox>
            <SiteInfo>
              <svg width="20" height="20" viewBox="0 0 20 20" fill="none" stroke="#e6e6e6" strokeWidth="1.8"><circle cx="10" cy="10" r="8.9" /><path d="M10 9v5.8M10 5.3v2" /></svg>
            </SiteInfo>
            <Url>localhost<span>:3000/dashboard/weather</span></Url>
            <OmniActions>
              <InstallIcon /><MdOutlineZoomOut size={28} /><MdStarBorder size={29} />
            </OmniActions>
          </Omnibox>
          <Extensions>
            <svg width="24" height="24" viewBox="0 0 24 24" fill="none" stroke="#8f8f8f" strokeWidth="4">
              <path d="M12 8V6.5Q12 2.5 8 2.5T3.5 6.5v11Q3.5 21.5 8 21.5T12 17.5V16" />
              <g fill="#8f8f8f" stroke="none"><circle cx="19.5" cy="6" r="2.6" /><circle cx="19.5" cy="12" r="2.6" /><circle cx="19.5" cy="18" r="2.6" /></g>
            </svg>
            <PuzzleSlot><PuzzleIcon /></PuzzleSlot>
            <Divider />
            <Avatar>c</Avatar>
            <svg width="5" height="22" viewBox="0 0 5 22" fill="#cfcfcf"><circle cx="2.5" cy="2.5" r="2.3" /><circle cx="2.5" cy="11" r="2.3" /><circle cx="2.5" cy="19.5" r="2.3" /></svg>
          </Extensions>
        </Toolbar>
      </ToolbarBack>

      <Page>
        <Sidebar>
          <SidebarTitle>Dashboard</SidebarTitle>
          <NavItem><FaCloudSun size={20.5} /><NavLabel $active>Weather</NavLabel></NavItem>
          <NavItem><FaIndustry size={20.5} /><NavLabel>Pollution</NavLabel></NavItem>
          <NavItem><FaGraduationCap size={20.5} /><NavLabel>Education</NavLabel></NavItem>
        </Sidebar>
        <Main>
          <Header>
            <Brand>AirAware</Brand>
            <SearchBox>
              <svg width="23" height="23" viewBox="0 0 23 23" fill="none" stroke="#9ca8bb" strokeWidth="1.3"><circle cx="10.5" cy="10.5" r="9.5" /><path d="M17.5 17.5l4.5 4.5" /></svg>
              <span>Search for something..</span>
            </SearchBox>
            <RoundButton><MdSettings size={24} /></RoundButton>
            <RoundButton>
              <svg width="32" height="32" viewBox="0 0 32 32" fill="none" stroke="#d8332c" strokeWidth="1.6">
                <path d="M6.5 23h19M8.600 23c1-2 .7-5 .7-9a6.800 7.300 0 0 1 13.600 0c0 4-.2 7 .7 9M13.200 23a2.900 3 0 0 0 5.800 0" />
                <circle cx="25.5" cy="6.2" r="4.4" fill="#d8332c" stroke="none" />
              </svg>
            </RoundButton>
          </Header>
          <Summary>
            <NowPanel $bg="#fee2e2">
              <Condition>
                <ScatteredIcon size={120} />
                <ConditionName>Clouds</ConditionName>
                <ConditionText>scattered clouds</ConditionText>
              </Condition>
              <TempBlock>
                <BigTemp>25°C</BigTemp>
                <Range>max: 25°C min: 25°C</Range>
              </TempBlock>
            </NowPanel>
            <CityPanel $bg="#dbeafe">
              <City>Pune</City>
              {readings.map(([t, icon]) => <CityRow key={t}>{icon}<span>{t}</span></CityRow>)}
            </CityPanel>
            <MetricsPanel $bg="#dcfce7">
              {metrics.map(([t, icon]) => <Metric key={t}>{icon}<span>{t}</span></Metric>)}
            </MetricsPanel>
          </Summary>
          <Lower>
            <MapBox>
              <MapDrawing />
              <ZoomControl>
                <ZoomKey><svg width="15" height="15" viewBox="0 0 15 15" stroke="#000" strokeWidth="2.2"><path d="M7.5 0v15M0 7.5h15" /></svg></ZoomKey>
                <ZoomKey><svg width="15" height="15" viewBox="0 0 15 15" stroke="#000" strokeWidth="2.2"><path d="M0 7.5h15" /></svg></ZoomKey>
              </ZoomControl>
              <Attribution>
                <svg width="15" height="10" viewBox="0 0 15 10"><path fill="#4c7be1" d="M0 0h15v5H0z" /><path fill="#ffd500" d="M0 5h15v5H0z" /></svg>
                <a>Leaflet</a> | © <a>OpenStreetMap</a> contributors
              </Attribution>
            </MapBox>
            <Forecast>
              <ForecastTitle>Pune Weather Forecast</ForecastTitle>
              <DayGrid>
                {days.map((d) => (
                  <DayCard key={d.day}>
                    <DayName>{d.day}</DayName>
                    <DayBody>
                      {d.text === "broken clouds" ? <BrokenIcon size={76.8} /> : <ScatteredIcon size={76.8} />}
                      <div>
                        <DayTemp>{`${d.temp}°C`}</DayTemp>
                        <DayText>{d.text}</DayText>
                        <DayRange>{`Max: ${d.max}°C Min: ${d.min}°C`}</DayRange>
                      </div>
                    </DayBody>
                  </DayCard>
                ))}
              </DayGrid>
            </Forecast>
          </Lower>
        </Main>
        <ScrollTrack>
          <svg width="11" height="6" viewBox="0 0 11 6" fill="#a3a3a3"><path d="M5.5 0L11 6H0z" /></svg>
          <ScrollThumb />
          <svg width="11" height="6" viewBox="0 0 11 6" fill="#505050"><path d="M0 0h11L5.5 6z" /></svg>
        </ScrollTrack>
      </Page>
      <Taskbar>
        <TaskPart $w={54} $c="#45080f" />
        <TaskPart $w={387} $c="#853a3a" $top="#9c5c5c" />
        <TaskPart $w={173} $c="#45080f" />
        <TaskPart $w={48} $c="#7c060b" />
        <TaskPart $w={7} $c="#5a0610" />
      </Taskbar>
    </Screen>
  );
}
